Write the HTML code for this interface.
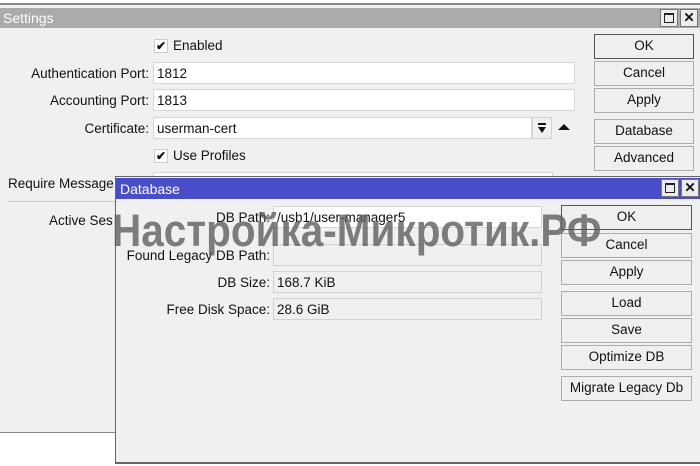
<!DOCTYPE html>
<html><head><meta charset="utf-8"><style>
*{box-sizing:border-box;margin:0;padding:0}
body{width:700px;height:466px;background:#fff;position:relative;overflow:hidden;font-family:"Liberation Sans",Arial,sans-serif;font-size:13.5px;color:#111}
.a{position:absolute}
.win{position:absolute;background:#f0f0f0}
.lbl{position:absolute;text-align:right;white-space:nowrap}
.inp{position:absolute;background:#fff;border:1px solid #d6d6d6;padding:3px 3px 0;height:22px;white-space:nowrap}
.ro{background:#f0f0f0;border:1px solid #d2d2d2}
.btn{position:absolute;border:1px solid #adadad;background:#efefef;text-align:center;line-height:22px;height:25px}
.cb{position:absolute;width:14px;height:14px;background:#fff;border:1px solid #ccc;font-size:12px;line-height:12px;text-align:center;font-weight:bold}
.tb{position:absolute;width:18px;height:18px;border:1px solid #777;background:#ececec}
</style></head><body>
<div class="a" style="left:0;top:3px;width:700px;height:2px;background:#8a8a8a"></div>
<div class="win" style="left:0;top:5px;width:700px;height:428px;border-bottom:1px solid #888">
  <div class="a" style="left:0;top:3px;width:700px;height:20px;background:#ababab;color:#fff;padding:2px 3px;font-size:14px">Settings</div>
  <div class="tb" style="left:660px;top:4px"><div class="a" style="left:3px;top:3px;width:10px;height:10px;border:1px solid #222;border-top-width:2px"></div></div>
  <div class="tb" style="left:680px;top:4px;text-align:center;font-weight:bold;line-height:15px">✕</div>
</div>
<div class="cb" style="left:154px;top:39px">✔</div><div class="lbl" style="left:173px;top:38px">Enabled</div>
<div class="lbl" style="left:0;width:149px;top:66px">Authentication Port:</div>
<div class="inp" style="left:153px;top:62px;width:422px">1812</div>
<div class="lbl" style="left:0;width:149px;top:93px">Accounting Port:</div>
<div class="inp" style="left:153px;top:89px;width:422px">1813</div>
<div class="lbl" style="left:0;width:149px;top:121px">Certificate:</div>
<div class="inp" style="left:153px;top:117px;width:379px">userman-cert</div>
<div class="inp ro" style="left:532px;top:117px;width:20px;padding:0">
  <div class="a" style="left:5px;top:5px;width:8px;height:2px;background:#111"></div>
  <div class="a" style="left:5px;top:9px;width:0;height:0;border-left:4px solid transparent;border-right:4px solid transparent;border-top:6px solid #111"></div>
</div>
<div class="a" style="left:558px;top:124px;width:0;height:0;border-left:6px solid transparent;border-right:6px solid transparent;border-bottom:6px solid #111"></div>
<div class="cb" style="left:154px;top:149px">✔</div><div class="lbl" style="left:173px;top:148px">Use Profiles</div>
<div class="lbl" style="left:8px;top:176px">Require Message</div>
<div class="inp" style="left:153px;top:172px;width:400px"></div>
<div class="a" style="left:8px;top:201px;width:108px;height:1px;background:#ccc"></div>
<div class="lbl" style="left:49px;top:213px">Active Ses</div>
<div class="btn" style="left:594px;top:34px;width:100px;border-color:#555">OK</div>
<div class="btn" style="left:594px;top:61px;width:100px">Cancel</div>
<div class="btn" style="left:594px;top:88px;width:100px">Apply</div>
<div class="btn" style="left:594px;top:119px;width:100px">Database</div>
<div class="btn" style="left:594px;top:146px;width:100px">Advanced</div>

<div class="win" style="left:115px;top:176px;width:590px;height:288px;border:1px solid #666;border-bottom:2px solid #666">
  <div class="a" style="left:0;top:1px;width:590px;height:21px;background:#4a4dc8;color:#fff;padding:3px 4px;font-size:14px">Database</div>
  <div class="tb" style="left:545px;top:2px"><div class="a" style="left:3px;top:3px;width:10px;height:10px;border:1px solid #222;border-top-width:2px"></div></div>
  <div class="tb" style="left:565px;top:2px;text-align:center;font-weight:bold;line-height:15px">✕</div>
</div>
<div class="lbl" style="left:115px;width:155px;top:210px">DB Path:</div>
<div class="inp" style="left:273px;top:206px;width:269px">/usb1/user-manager5</div>
<div class="lbl" style="left:115px;width:155px;top:248px">Found Legacy DB Path:</div>
<div class="inp ro" style="left:273px;top:244px;width:269px"></div>
<div class="lbl" style="left:115px;width:155px;top:275px">DB Size:</div>
<div class="inp ro" style="left:273px;top:271px;width:269px">168.7 KiB</div>
<div class="lbl" style="left:115px;width:155px;top:302px">Free Disk Space:</div>
<div class="inp ro" style="left:273px;top:298px;width:269px">28.6 GiB</div>
<div class="btn" style="left:561px;top:205px;width:131px;border-color:#555">OK</div>
<div class="btn" style="left:561px;top:233px;width:131px">Cancel</div>
<div class="btn" style="left:561px;top:260px;width:131px">Apply</div>
<div class="btn" style="left:561px;top:291px;width:131px">Load</div>
<div class="btn" style="left:561px;top:318px;width:131px">Save</div>
<div class="btn" style="left:561px;top:345px;width:131px">Optimize DB</div>
<div class="btn" style="left:561px;top:376px;width:131px">Migrate Legacy Db</div>
<div class="a" style="left:112px;top:205px;font-size:45px;font-weight:bold;color:rgba(95,95,95,0.8);white-space:nowrap;transform:scaleX(0.9);transform-origin:0 0;font-family:'Liberation Sans','DejaVu Sans',sans-serif">Настройка-Микротик.РФ</div>
</body></html>
